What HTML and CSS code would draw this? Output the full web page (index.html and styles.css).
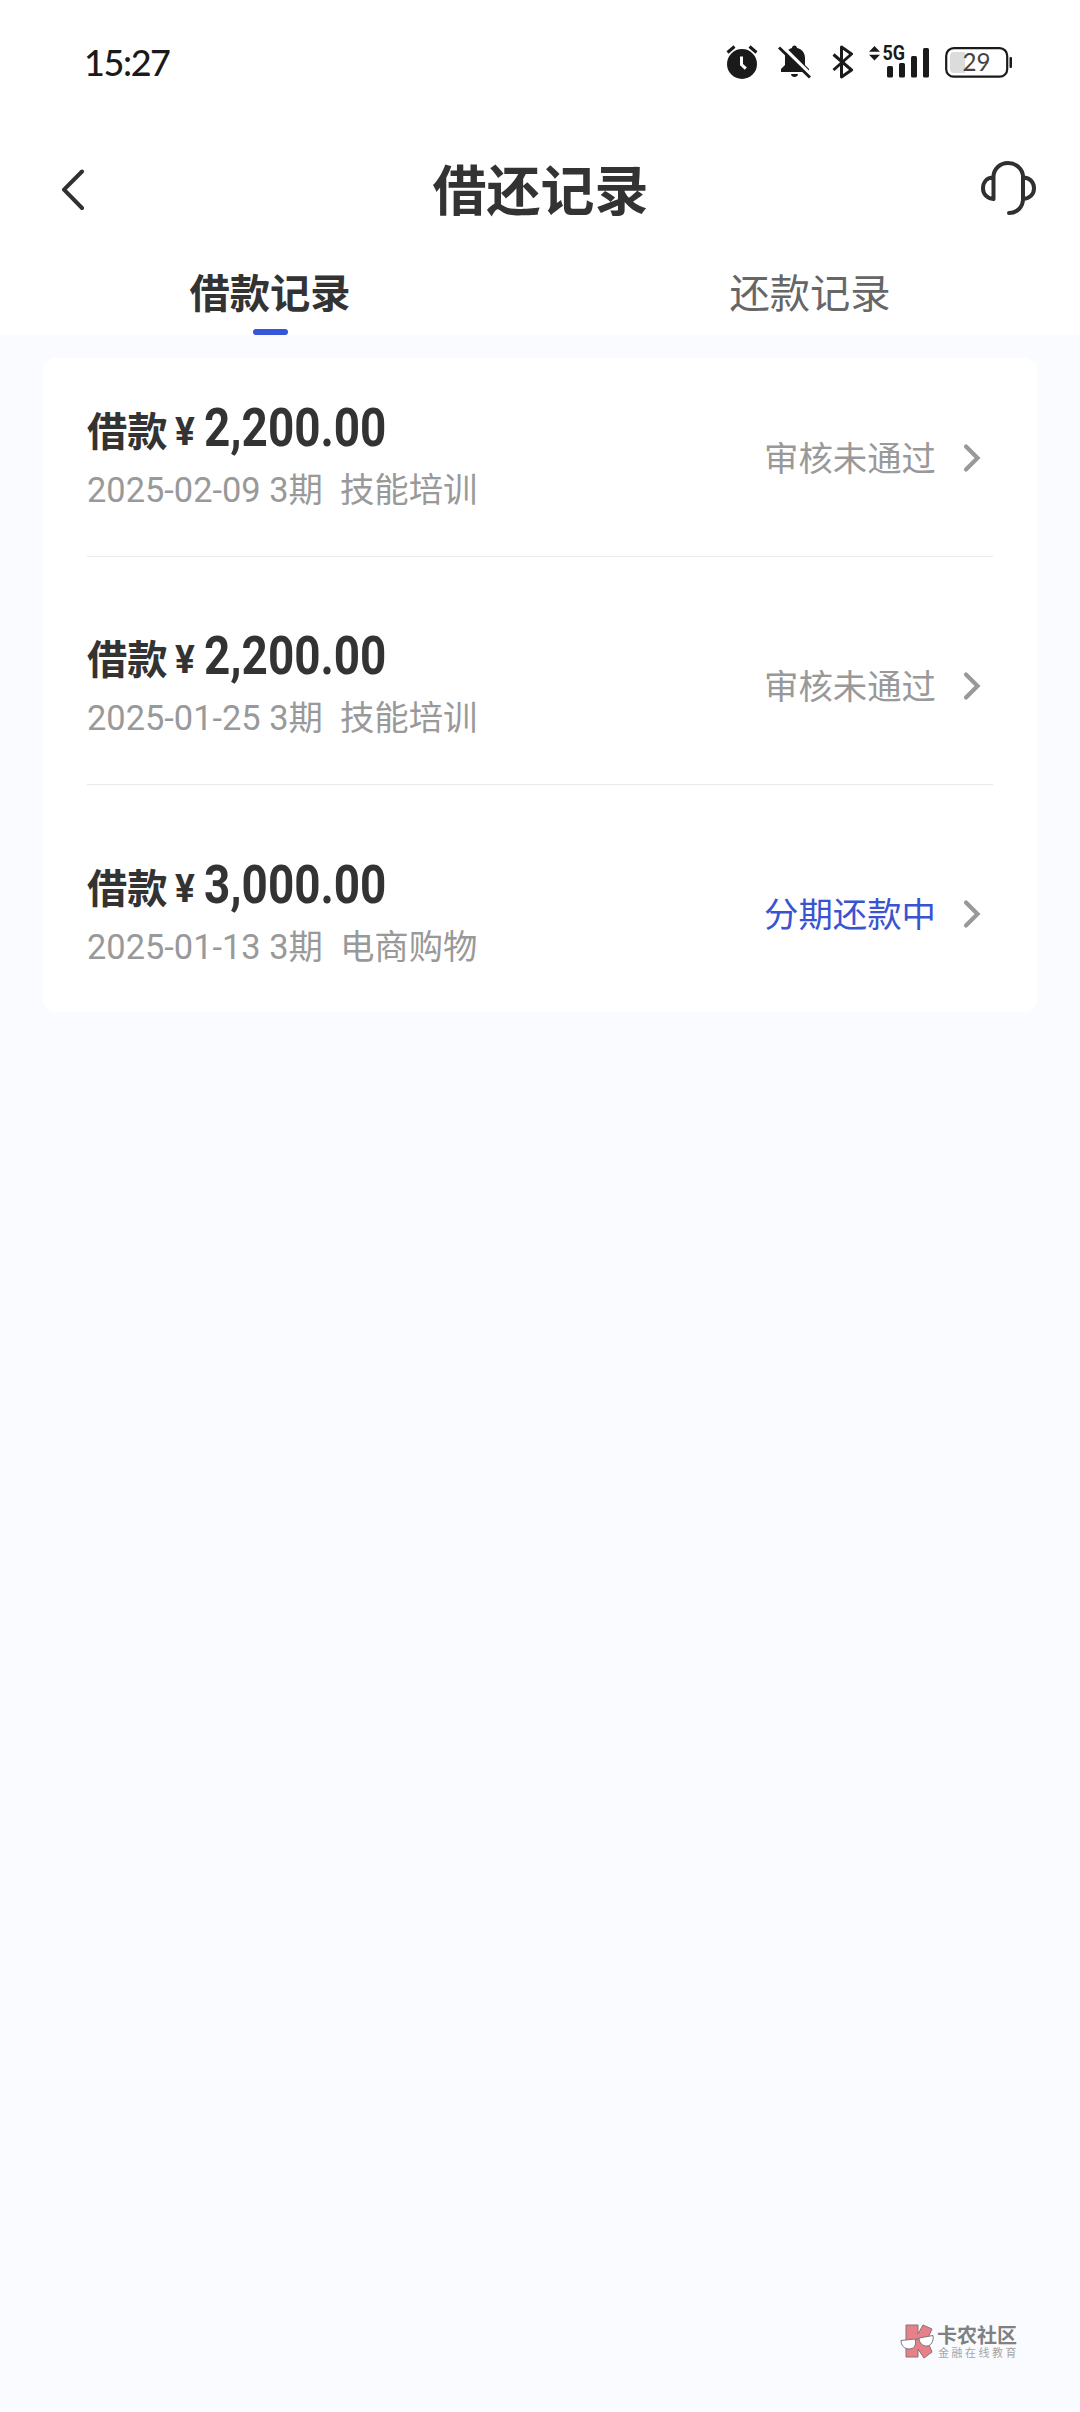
FILE: index.html
```html
<!DOCTYPE html>
<html lang="zh-CN">
<head>
<meta charset="utf-8">
<title>借还记录</title>
<link rel="stylesheet" href="styles.css">
</head>
<body>
<div class="page">
  <header class="top">
    <div class="statusbar">
      <span class="time">15:27</span>
      <div class="status-icons">
        <svg class="alarm" width="32" height="34" viewBox="0 0 32 34">
          <circle cx="16" cy="19" r="15" fill="#1a1a1a"/>
          <path d="M1.500 7.500l7-6M30.500 7.500l-7-6" stroke="#1a1a1a" stroke-width="3" fill="none"/>
          <path d="M15.500 11.500v8.200l4.300 4" stroke="#fff" stroke-width="3" fill="none"/>
        </svg>
        <svg class="bell" width="33" height="34" viewBox="0 0 33 34">
          <path d="M14 3c0-3.500 5-3.500 5 0 5 1 8 5 8 10v7l4 4v3H3v-3l4-4v-8c0-5 3-8 7-9zM13 29h7c0 4-7 4-7 0z" fill="#1a1a1a"/>
          <path d="M3.500 .5l31 31" stroke="#fff" stroke-width="3.500"/>
          <path d="M1 2.500l31 30" stroke="#1a1a1a" stroke-width="3"/>
        </svg>
        <svg class="bluetooth" width="22" height="34" viewBox="0 0 22 34">
          <path d="M1.500 9.500l18 15.500-10 7V2l10 7-18 16" stroke="#1a1a1a" stroke-width="3" fill="none" stroke-linejoin="round"/>
        </svg>
        <svg class="signal" width="61" height="42" viewBox="0 -8 61 42">
          <path d="M0 6.800L5.500 1l5.500 5.800zM0 9.800h11L5.500 15.500z" fill="#1a1a1a"/>
          <text class="network" x="13.500" y="15.300" textLength="22.500" lengthAdjust="spacingAndGlyphs">5G</text>
          <rect x="18" y="21" width="6" height="11.500" rx="1.500" fill="#1a1a1a"/>
          <rect x="30" y="18" width="6" height="14.500" rx="1.500" fill="#1a1a1a"/>
          <rect x="42" y="11" width="6" height="21.500" rx="1.500" fill="#1a1a1a"/>
          <rect x="54" y="3" width="6" height="29.500" rx="1.500" fill="#1a1a1a"/>
        </svg>
        <svg class="battery" width="68" height="34" viewBox="0 0 68 34">
          <path d="M20 7H9q-4 0-4 4v13q0 4 4 4h11z" fill="#dcdcdc"/>
          <rect x="1.200" y="3.200" width="61" height="28.500" rx="7.500" fill="none" stroke="#1a1a1a" stroke-width="2.200"/>
          <rect x="64.500" y="12" width="2.500" height="11" rx="1" fill="#1a1a1a"/>
          <text class="charge" x="31.500" y="26" text-anchor="middle" textLength="28" lengthAdjust="spacingAndGlyphs">29</text>
        </svg>
      </div>
    </div>
    <div class="navbar">
      <svg class="back" width="25" height="42" viewBox="0 0 25 42">
        <path d="M21 2.500L3 20.700 21 39" stroke="#303030" stroke-width="4" fill="none" stroke-linecap="round" stroke-linejoin="round"/>
      </svg>
      <h1 class="title">借还记录</h1>
      <svg class="service" width="56" height="56" viewBox="0 0 56 56">
        <path d="M13.500 39V17C13.500 9 20 3 28 3s15 6 15 14v22c0 8-6 14-14 14M13.500 17.500C6 17.500 3 23 3 28.500S7 38.500 13.500 39M43 17.500C50.500 17.500 54 23 54 28.500S50 38.500 43 39" stroke="#303030" stroke-width="4" fill="none" stroke-linecap="round" stroke-linejoin="round"/>
      </svg>
    </div>
    <nav class="tabs">
      <div class="tab active">借款记录</div>
      <div class="tab">还款记录</div>
    </nav>
  </header>

  <main class="card">
    <section class="row">
      <div class="info">
        <div class="headline"><span class="label">借款</span><span class="yen">¥</span><span class="amount">2,200.00</span></div>
        <div class="detail">2025-02-09 3期&nbsp; 技能培训</div>
      </div>
      <span class="state">审核未通过</span>
      <svg class="arrow" width="18" height="30" viewBox="0 0 18 30"><path d="M3 3.500l11.500 11.500L3 26.500" stroke="#999" stroke-width="4.200" fill="none" stroke-linecap="round"/></svg>
    </section>
    <section class="row">
      <div class="info">
        <div class="headline"><span class="label">借款</span><span class="yen">¥</span><span class="amount">2,200.00</span></div>
        <div class="detail">2025-01-25 3期&nbsp; 技能培训</div>
      </div>
      <span class="state">审核未通过</span>
      <svg class="arrow" width="18" height="30" viewBox="0 0 18 30"><path d="M3 3.500l11.500 11.500L3 26.500" stroke="#999" stroke-width="4.200" fill="none" stroke-linecap="round"/></svg>
    </section>
    <section class="row">
      <div class="info">
        <div class="headline"><span class="label">借款</span><span class="yen">¥</span><span class="amount">3,000.00</span></div>
        <div class="detail">2025-01-13 3期&nbsp; 电商购物</div>
      </div>
      <span class="state repaying">分期还款中</span>
      <svg class="arrow" width="18" height="30" viewBox="0 0 18 30"><path d="M3 3.500l11.500 11.500L3 26.500" stroke="#999" stroke-width="4.200" fill="none" stroke-linecap="round"/></svg>
    </section>
  </main>

  <div class="watermark">
    <svg width="35" height="36" viewBox="0 0 35 36">
      <path d="M6 1h12v9l5-9 9 4-5 11 5 12-8 6-6-9v8H6z" fill="#e8808a" stroke="#8a7078" stroke-width="1"/>
      <path d="M1 16.500l14-1.500c2 6-1 10-6 10s-8-4-8-8.500zM19 14l14-2.500c1 6-2 10-6 10.500s-8-3-8-8z" fill="#fff" stroke="#777" stroke-width="1"/>
      <path d="M15 16q2-2 4-1" stroke="#777" fill="none"/>
    </svg>
    <div class="brand">
      <div class="brand-name">卡农社区</div>
      <div class="brand-sub">金融在线教育</div>
    </div>
  </div>
</div>
</body>
</html>
```
FILE: styles.css
```css
* { box-sizing: border-box; }

body {
  margin: 0;
  background: #fafbff;
  color: #333;
  font-family: Roboto, "Noto Sans CJK SC", sans-serif;
}

.page {
  position: relative;
  min-height: 2412px;
}

.top {
  height: 335px;
  background: #fff;
}

.statusbar {
  display: flex;
  justify-content: space-between;
  height: 124px;
  padding: 45px 67px 0 84px;
}

.time {
  margin-top: -1px;
  font: 500 36px/36px Lato, sans-serif;
  color: #1a1a1a;
  letter-spacing: -1.4px;
}

.status-icons {
  display: flex;
  align-items: flex-start;
}

.bell { margin-left: 20px; }
.bluetooth { margin-left: 21px; }
.signal { margin: -8px 0 0 15px; }
.battery { margin-left: 15px; }

.network {
  font: 700 20px Roboto, sans-serif;
  fill: #1a1a1a;
}

.charge {
  font: 400 25px Lato, sans-serif;
  fill: #444;
}

.navbar {
  display: flex;
  align-items: center;
  height: 132px;
  padding: 0 44px 0 61px;
}

.back { flex: none; }
.service { flex: none; margin-top: -5px; }

.title {
  flex: 1;
  margin: 0;
  padding: 6px 0 0 15px;
  text-align: center;
  font-size: 54px;
  line-height: 80px;
  font-weight: 700;
}

.tabs {
  display: flex;
  height: 79px;
}

.tab {
  flex: 1;
  display: flex;
  flex-direction: column;
  align-items: center;
  height: 79px;
  padding-top: 3px;
  font-size: 40.3px;
  line-height: 72px;
  color: #666;
}

.active {
  color: #333;
  font-weight: 700;
}

.active::after {
  content: "";
  width: 35px;
  height: 6px;
  margin-top: -2px;
  border-radius: 3px;
  background: #3655d8;
}

.card {
  margin: 23px 43px 0;
  padding: 0 44px;
  height: 654px;
  background: #fff;
  border-radius: 12px;
}

.row {
  display: flex;
  align-items: center;
  height: 228px;
  padding: 29px 12px 0 0;
  border-bottom: 1px solid #e9e9e9;
}

.row:first-child { height: 199px; padding-top: 0; }
.row:last-child { border: 0; }

.info { flex: 1; }

.headline {
  display: flex;
  align-items: flex-start;
  height: 66px;
  line-height: 60px;
  font-weight: 700;
}

.label {
  width: 88px;
  padding-top: 5px;
  font-size: 40.3px;
}

.yen {
  width: 29px;
  padding-top: 4px;
  font-size: 39px;
  transform: scaleX(0.95);
  transform-origin: left;
}

.amount {
  font-size: 53px;
  width: 180px;
  transform: scaleX(0.865);
  transform-origin: left;
}

.detail {
  font-size: 34.4px;
  line-height: 52px;
  color: #999;
  white-space: pre;
}

.state {
  padding-top: 3px;
  font-size: 34.4px;
  line-height: 50px;
  color: #999;
}

.repaying { color: #3a54d1; }

.arrow { margin: 1px 0 0 27px; }

.watermark {
  position: absolute;
  left: 900px;
  top: 2324px;
  display: flex;
  gap: 2px;
}

.brand {
  display: flex;
  flex-direction: column;
  gap: 2px;
  padding-top: 2px;
}

.brand-name {
  font-size: 20px;
  line-height: 20px;
  font-weight: 700;
  color: #808080;
}

.brand-sub {
  font-size: 11px;
  line-height: 12px;
  letter-spacing: 2.5px;
  padding-left: 1px;
  color: #a5a5a5;
}
```
